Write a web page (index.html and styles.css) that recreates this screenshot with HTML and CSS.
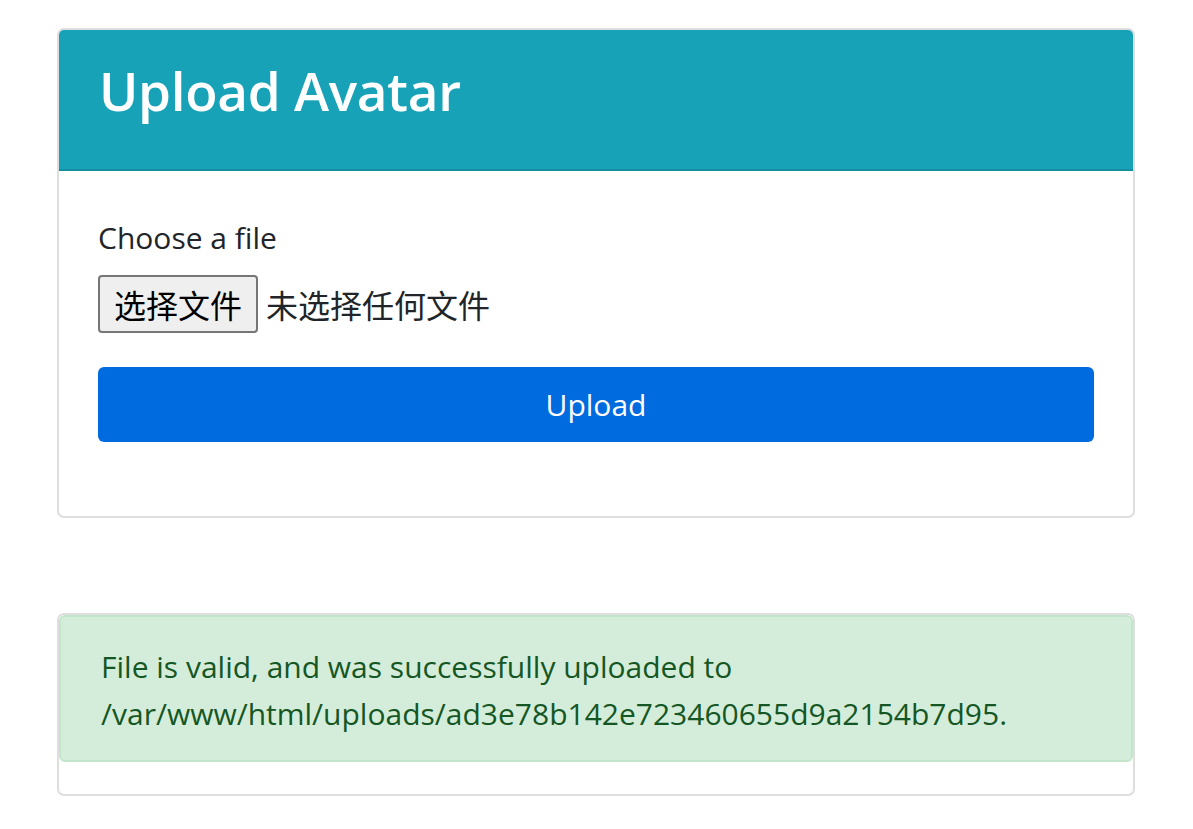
FILE: index.html
```html
<!DOCTYPE html>
<html lang="en">
<head>
<meta charset="utf-8">
<title>Upload Avatar</title>
<link rel="stylesheet" href="styles.css">
</head>
<body>
<main class="page">
  <section class="card">
    <header class="card-header">
      <h1 class="title">Upload Avatar</h1>
    </header>
    <form class="card-body">
      <label class="field-label">Choose a file</label>
      <div class="file-row">
        <span class="file-btn">选择文件</span>
        <span class="file-name">未选择任何文件</span>
      </div>
      <button type="button" class="btn-upload">Upload</button>
    </form>
  </section>

  <section class="card card-result">
    <div class="alert">File is valid, and was successfully uploaded to /var/www/html/uploads/ad3e78b142e723460655d9a2154b7d95.</div>
  </section>
</main>
</body>
</html>
```

FILE: styles.css
```css
* { box-sizing: border-box; }

body {
  margin: 0;
  background: #fff;
  color: #212529;
  font-family: "Open Sans", "Noto Sans", "Noto Sans CJK SC", sans-serif;
}

.page {
  padding: 28px 58px 0 57px;
}

.card {
  border: 2px solid #dedede;
  border-radius: 7px;
  overflow: hidden;
  background: #fff;
}

.card-header {
  background: #18a2b8;
  border-bottom: 2px solid #148fa1;
  height: 141px;
  padding: 29px 40px 0 40px;
}

.title {
  margin: 0;
  color: #fff;
  font-size: 53px;
  font-weight: 600;
  letter-spacing: -0.3px;
  line-height: 1.2;
}

.card-body {
  padding: 46px 39px 74px 39px;
  display: flex;
  flex-direction: column;
}

.field-label {
  font-size: 30px;
  line-height: 42px;
  margin-bottom: 16px;
}

.file-row {
  display: flex;
  align-items: center;
  gap: 8px;
  margin-bottom: 34px;
}

.file-btn {
  width: 160px;
  height: 58px;
  background: #efefef;
  border: 2px solid #767676;
  border-radius: 4px;
  display: flex;
  align-items: center;
  justify-content: center;
  font-family: "Noto Sans CJK SC", sans-serif;
  font-size: 32px;
  color: #000;
}

.file-name {
  font-family: "Noto Sans CJK SC", sans-serif;
  font-size: 32px;
  color: #212529;
}

.btn-upload {
  width: 100%;
  height: 75px;
  border: none;
  border-radius: 6px;
  background: #006adf;
  color: #fff;
  font-family: "Open Sans", "Noto Sans", sans-serif;
  font-size: 30px;
  cursor: pointer;
}

.card-result {
  margin-top: 95px;
}

.alert {
  background: #d4edda;
  border: 2px solid #c3e6cb;
  border-radius: 6px;
  color: #155724;
  font-size: 30px;
  line-height: 47px;
  padding: 26px 40px 23px 40px;
  margin-bottom: 32px;
}
```
